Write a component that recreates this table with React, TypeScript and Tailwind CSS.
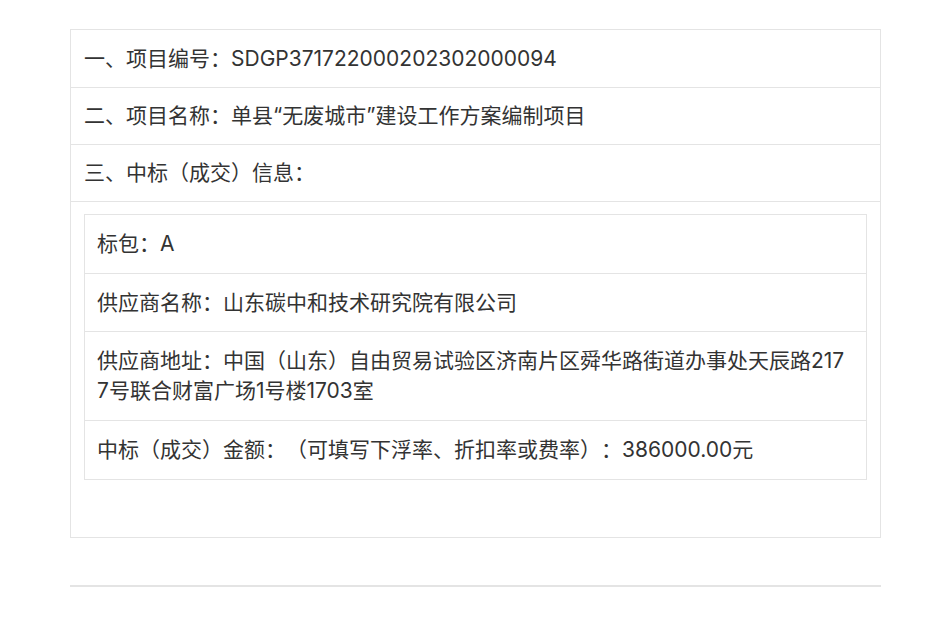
export default function App() {
  const font = { fontFamily: 'Inter, "Noto Sans CJK SC", sans-serif' }
  return (
    <div
      className="w-[950px] h-[630px] bg-white text-[#333] text-[21px] leading-[30px] [text-spacing-trim:space-all]"
      style={font}
    >
      <div className="pt-[29px] pl-[70px] pr-[69px]">
        <table className="w-full border-collapse border border-[#e4e4e4]">
          <tbody>
            <tr>
              <td className="border border-[#e4e4e4] px-[13px] py-[13.5px]">一、项目编号：SDGP371722000202302000094</td>
            </tr>
            <tr>
              <td className="border border-[#e4e4e4] px-[13px] py-[13px]">二、项目名称：单县“无废城市”建设工作方案编制项目</td>
            </tr>
            <tr>
              <td className="border border-[#e4e4e4] px-[13px] py-[13px]">三、中标（成交）信息：</td>
            </tr>
            <tr>
              <td className="border border-[#e4e4e4] px-[13px] pt-[12px] pb-[57px] align-top">
                <table className="w-full border-collapse border border-[#e4e4e4]">
                  <tbody>
                    <tr>
                      <td className="border border-[#e4e4e4] px-[12px] py-[14px]">标包：A</td>
                    </tr>
                    <tr>
                      <td className="border border-[#e4e4e4] px-[12px] py-[13.5px]">供应商名称：山东碳中和技术研究院有限公司</td>
                    </tr>
                    <tr>
                      <td className="border border-[#e4e4e4] px-[12px] py-[14px] break-all">
                        供应商地址：中国（山东）自由贸易试验区济南片区舜华路街道办事处天辰路2177号联合财富广场1号楼1703室
                      </td>
                    </tr>
                    <tr>
                      <td className="border border-[#e4e4e4] px-[12px] py-[14px]">中标（成交）金额：（可填写下浮率、折扣率或费率）：386000.00元</td>
                    </tr>
                  </tbody>
                </table>
              </td>
            </tr>
          </tbody>
        </table>
        <div className="mt-[47px] h-[2px] bg-[#e4e4e4]" />
      </div>
    </div>
  )
}
